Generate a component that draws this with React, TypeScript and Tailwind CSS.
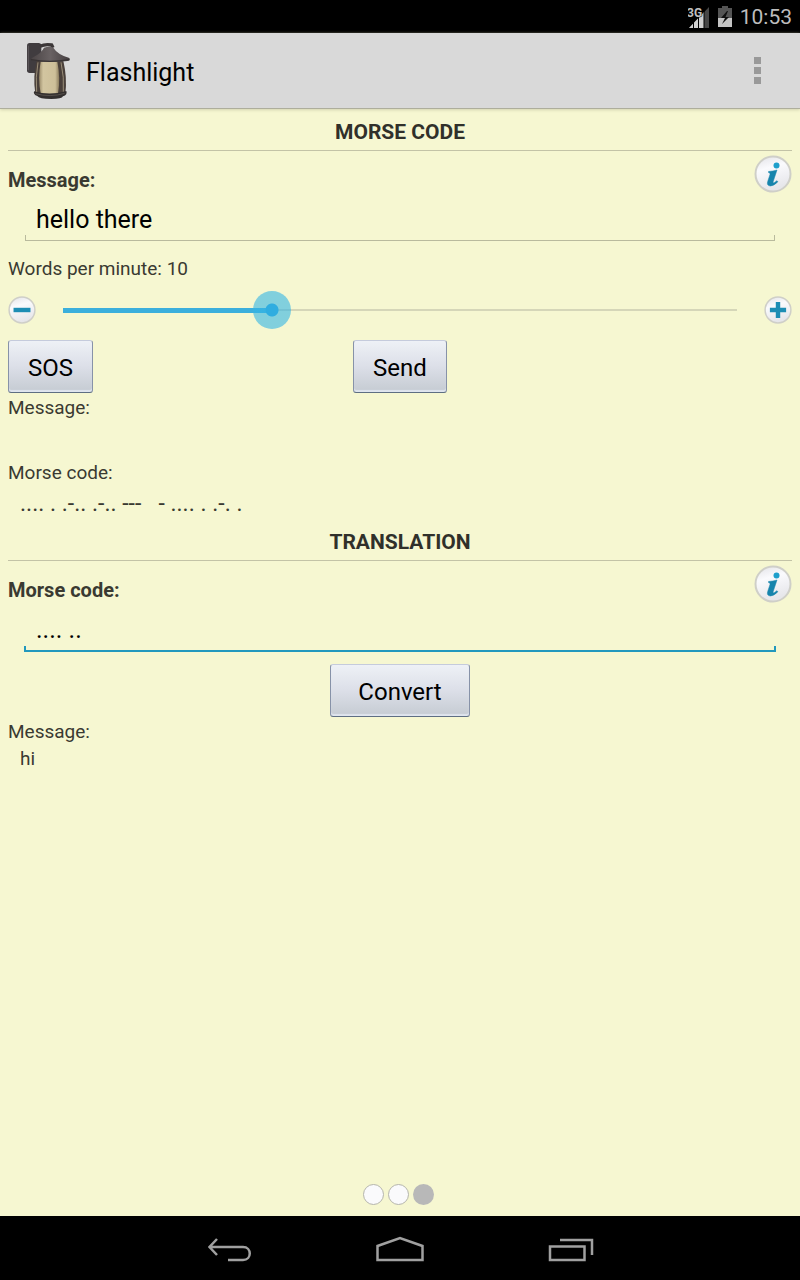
import { useState, type ReactNode } from "react";

const MORSE: Record<string, string> = {
  a: ".-", b: "-...", c: "-.-.", d: "-..", e: ".", f: "..-.", g: "--.",
  h: "....", i: "..", j: ".---", k: "-.-", l: ".-..", m: "--", n: "-.",
  o: "---", p: ".--.", q: "--.-", r: ".-.", s: "...", t: "-", u: "..-",
  v: "...-", w: ".--", x: "-..-", y: "-.--", z: "--..",
};

const LETTERS = Object.fromEntries(
  Object.entries(MORSE).map(([letter, code]) => [code, letter]),
);

const MIN_WPM = 1;
const MAX_WPM = 30;

function encode(text: string) {
  return text
    .toLowerCase()
    .split(" ")
    .map((word) => [...word].map((c) => MORSE[c] ?? "").join(" "))
    .join("   ");
}

function decode(code: string) {
  return code
    .trim()
    .split(/\s{3,}/)
    .map((word) => word.split(" ").map((c) => LETTERS[c] ?? "").join(""))
    .join(" ");
}

/* ---------- icons ---------- */

function LanternIcon() {
  return (
    <svg viewBox="78 33 132 174" className="h-[58px] w-11" aria-hidden="true">
      <defs>
        <linearGradient id="glass" x1="0" x2="1">
          <stop offset="0" stopColor="#9c8d6c" />
          <stop offset="0.2" stopColor="#d2c5a0" />
          <stop offset="0.8" stopColor="#cdbf99" />
          <stop offset="1" stopColor="#8b7c5e" />
        </linearGradient>
        <linearGradient id="roof" x1="0" x2="1">
          <stop offset="0" stopColor="#4b4546" />
          <stop offset="0.5" stopColor="#696263" />
          <stop offset="1" stopColor="#443e3f" />
        </linearGradient>
      </defs>
      <rect x="81" y="36" width="43" height="90" rx="8" fill="#403c3f" />
      <path d="M85 44v74" stroke="#5e5a5d" strokeWidth="3" />
      <path d="M120 46q16-8 35-4l4 8" fill="none" stroke="#3c3738" strokeWidth="10" />
      <path d="M110 90h80q12 50 6 98h-90q-8-50 4-98z" fill="#4a403a" />
      <path d="M122 92h50q10 50 2 95q-26 9-52 0q-9-46 0-95z" fill="url(#glass)" />
      <path d="M114 94q-8 44-4 90M183 94q10 44 7 90" fill="none" stroke="#9a8e78" strokeWidth="3" />
      <path d="M132 50q18-6 28 0q12 20 48 31q4 8-5 9q-52 6-105-2q-8-3-1-8q28-14 35-30z" fill="url(#roof)" />
      <path d="M93 86q56 10 115 0" fill="none" stroke="#383334" strokeWidth="4" />
      <path d="M102 181q48 14 97-1q4 12-10 16q-3 8-35 8q-37 0-42-9q-13-4-10-14z" fill="#332f2e" />
      <path d="M106 188q45 12 88-1" fill="none" stroke="#68605b" strokeWidth="2" />
    </svg>
  );
}

function SignalIcon() {
  return (
    <svg viewBox="0 0 24 22" className="h-[22px] w-6" aria-hidden="true">
      <path d="M1 22 21 1v21z" fill="#464646" />
      <path d="M1 22 16 6v16z" fill="#d0d0d0" />
      <path d="M5.500 15v7M10.500 11v11M16 5v17" stroke="#000" strokeWidth="1" />
      <text
        x="-1"
        y="11"
        fontFamily="Roboto, sans-serif"
        fontSize="12"
        fontWeight="700"
        fill="#c0c0c0"
        stroke="#000"
        strokeWidth="1"
        paintOrder="stroke"
      >
        3G
      </text>
    </svg>
  );
}

function BatteryIcon() {
  return (
    <svg viewBox="0 0 14 21" className="h-[21px] w-3.5" aria-hidden="true">
      <path d="M4 0h6v2h4v10H0V2h4z" fill="#555" />
      <path d="M0 12h14v9H0z" fill="#c4c4c4" />
      <path d="M9 5 3 12h4l-3 6 7-7H7.500L10 5z" fill="#111" />
    </svg>
  );
}

function Knob({ children, className }: { children: ReactNode; className: string }) {
  return (
    <svg viewBox="0 0 38 38" className={className} aria-hidden="true">
      <defs>
        <linearGradient id="knob" x1="0" x2="0.300" y2="1">
          <stop offset="0" stopColor="#e2e2e6" />
          <stop offset="0.4" stopColor="#fafafd" />
          <stop offset="1" stopColor="#e6e6ea" />
        </linearGradient>
      </defs>
      <circle cx="19" cy="19" r="17.500" fill="url(#knob)" stroke="#cfcfc8" strokeWidth="2" />
      {children}
    </svg>
  );
}

function InfoButton({ label }: { label: string }) {
  return (
    <button type="button" aria-label={label} className="mt-1 rounded-full">
      <Knob className="size-[38px]">
        <circle cx="22.500" cy="10.500" r="3" fill="#1e9fcb" />
        <path
          d="M14.500 16.500q4.500-.3 8.500-1.500l-3.800 11.500q-.5 2 1 1.200l2.800-2 .9 1q-4.200 4.300-7.500 4.300-4-.4-2.700-4.500l2.300-7.100q.5-1.900-1.500-1.900z"
          fill="#1684ac"
          stroke="#1684ac"
          strokeWidth="0.500"
        />
      </Knob>
    </button>
  );
}

/* ---------- form parts ---------- */

function SectionTitle({ children }: { children: ReactNode }) {
  return (
    <h2 className="flex h-[42px] items-center justify-center border-b border-[#c3c3a6] pt-1.5 text-[21px] font-bold text-[#30302a]">
      {children}
    </h2>
  );
}

function Field({
  id,
  label,
  info,
  value,
  active,
  onChange,
}: {
  id: string;
  label: string;
  info: string;
  value: string;
  active?: boolean;
  onChange: (value: string) => void;
}) {
  return (
    <>
      <div className="flex h-12 items-start justify-between">
        <label htmlFor={id} className="pt-4 text-xl leading-[27px] font-bold">
          {label}
        </label>
        <InfoButton label={info} />
      </div>
      <div className="relative mx-4">
        <input
          id={id}
          type="text"
          value={value}
          onChange={(e) => onChange(e.target.value)}
          className="block h-[43px] w-full bg-transparent px-3 pb-0.5 text-[25px] text-black outline-none"
        />
        <div
          className={
            active
              ? "pointer-events-none absolute inset-x-0 bottom-0 h-1.5 border-2 border-t-0 border-[#2298bd]"
              : "pointer-events-none absolute inset-x-0 bottom-0 mx-px mb-px h-1.5 border border-t-0 border-[#b9ba9d]"
          }
        />
      </div>
    </>
  );
}

function PushButton({ children, className, onClick }: { children: ReactNode; className: string; onClick?: () => void }) {
  return (
    <button
      type="button"
      onClick={onClick}
      className={`h-[53px] rounded-[3px] border border-t-[#c5cbdc] border-r-[#8792a8] border-b-[#5e6e82] border-l-[#8792a8] bg-linear-to-b from-[#eef1f6] via-[#dcdfe8] via-50% to-[#c5cbd2] pt-[3px] text-2xl text-black shadow-[inset_0_-2px_1px_#dfe5ee] ${className}`}
    >
      {children}
    </button>
  );
}

export default function App() {
  const [message, setMessage] = useState("hello there");
  const [wpm, setWpm] = useState(10);
  const [code, setCode] = useState(".... ..");
  const [translated, setTranslated] = useState("hi");

  const filled = ((wpm - MIN_WPM) / (MAX_WPM - MIN_WPM)) * 100;

  return (
    <div className="flex min-h-screen flex-col bg-[#f6f7d1] font-[Roboto,sans-serif] text-[19px] leading-[27px] text-[#3a3a31]">
      <div className="flex h-[33px] items-center justify-end bg-black pr-2 text-[21px] text-[#bdbdbd]">
        <SignalIcon />
        <span className="ml-1.5 flex">
          <BatteryIcon />
        </span>
        <span className="ml-2 pt-0.5">10:53</span>
      </div>

      <header className="flex h-[76px] items-center border-b border-[#aeae9c] bg-[#d9d9d9] pr-6 pl-[26px] shadow-[0_1px_3px_#d2d3b0]">
        <LanternIcon />
        <h1 className="ml-4 flex-1 pt-1 text-[25px] text-black">Flashlight</h1>
        <button type="button" aria-label="More options" className="flex flex-col gap-[3px] px-[15px] py-2">
          <span className="size-[7px] bg-[#999]" />
          <span className="size-[7px] bg-[#999]" />
          <span className="size-[7px] bg-[#999]" />
        </button>
      </header>

      <main className="flex flex-1 flex-col px-2">
        <section>
          <SectionTitle>MORSE CODE</SectionTitle>
          <Field id="message" label="Message:" info="About messages" value={message} onChange={setMessage} />

          <label htmlFor="wpm" className="mt-[13px] block">
            Words per minute: {wpm}
          </label>
          <div className="mt-[7px] flex h-[42px] items-center justify-between">
            <button type="button" aria-label="Slower" onClick={() => setWpm(Math.max(MIN_WPM, wpm - 1))}>
              <Knob className="size-7">
                <path d="M7.500 19h23" stroke="#1d8db4" strokeWidth="6" />
              </Knob>
            </button>
            <div className="relative mx-2 flex h-[38px] flex-1 items-center">
              <div className="absolute inset-x-[19px] h-0.5 bg-[#d5d6b8]" />
              <div className="absolute inset-x-[19px]">
                <div className="h-[5px] bg-[#3bafdc]" style={{ width: `${filled}%` }} />
              </div>
              <input
                id="wpm"
                type="range"
                min={MIN_WPM}
                max={MAX_WPM}
                value={wpm}
                onChange={(e) => setWpm(Number(e.target.value))}
                className="relative h-[38px] w-full appearance-none bg-transparent [&::-webkit-slider-thumb]:size-[38px] [&::-webkit-slider-thumb]:appearance-none [&::-webkit-slider-thumb]:rounded-full [&::-webkit-slider-thumb]:bg-[radial-gradient(circle,#2fade0_6px,#33b5e599_7px)]"
              />
            </div>
            <button type="button" aria-label="Faster" onClick={() => setWpm(Math.min(MAX_WPM, wpm + 1))}>
              <Knob className="size-7">
                <path d="M8 19h22M19 8v22" stroke="#1d8db4" strokeWidth="6" />
              </Knob>
            </button>
          </div>

          <div className="mt-[9px] grid grid-cols-3">
            <PushButton className="w-[85px] justify-self-start">SOS</PushButton>
            <PushButton className="w-[94px] justify-self-center">Send</PushButton>
          </div>

          <p className="mt-px">Message:</p>
          <p className="mt-[38px]">Morse code:</p>
          <output htmlFor="message" className="block h-[33px] px-3 pt-1 text-[23px] leading-[27px] whitespace-pre">
            {encode(message)}
          </output>
        </section>

        <section>
          <SectionTitle>TRANSLATION</SectionTitle>
          <Field id="code" label="Morse code:" info="About translation" value={code} active onChange={setCode} />
          <div className="mt-3 flex justify-center">
            <PushButton className="w-[140px]" onClick={() => setTranslated(decode(code))}>
              Convert
            </PushButton>
          </div>
          <p className="mt-px">Message:</p>
          <output htmlFor="code" className="block min-h-[27px] px-3">
            {translated}
          </output>
        </section>

        <div className="mt-auto mr-[3px] mb-[11px] flex justify-center gap-1">
          <span className="size-[21px] rounded-full border border-[#b5b5ad] bg-[#fafafc]" />
          <span className="size-[21px] rounded-full border border-[#b5b5ad] bg-[#fafafc]" />
          <span className="size-[21px] rounded-full bg-[#b8b8b8]" />
        </div>
      </main>

      <nav className="flex h-16 items-center justify-center gap-[122px] bg-black pt-1 text-[#a0a0a0]">
        <button type="button" aria-label="Back">
          <svg viewBox="0 0 50 28" className="h-7 w-[50px]" fill="none" stroke="currentColor" strokeWidth="2.500">
            <path d="M14 3 6.500 11 14 19M7 11h33c9 0 9 13 0 13H25" />
          </svg>
        </button>
        <button type="button" aria-label="Home">
          <svg viewBox="0 0 50 28" className="h-7 w-[50px]" fill="none" stroke="currentColor" strokeWidth="2.500">
            <path d="M2.500 24V10L25 2l22.500 8v14z" />
          </svg>
        </button>
        <button type="button" aria-label="Recent apps">
          <svg viewBox="0 0 50 28" className="h-7 w-[50px]" fill="none" stroke="currentColor" strokeWidth="2.500">
            <path d="M3 10.500h34.500V24H3zM13 4h32v15" />
          </svg>
        </button>
      </nav>
    </div>
  );
}
